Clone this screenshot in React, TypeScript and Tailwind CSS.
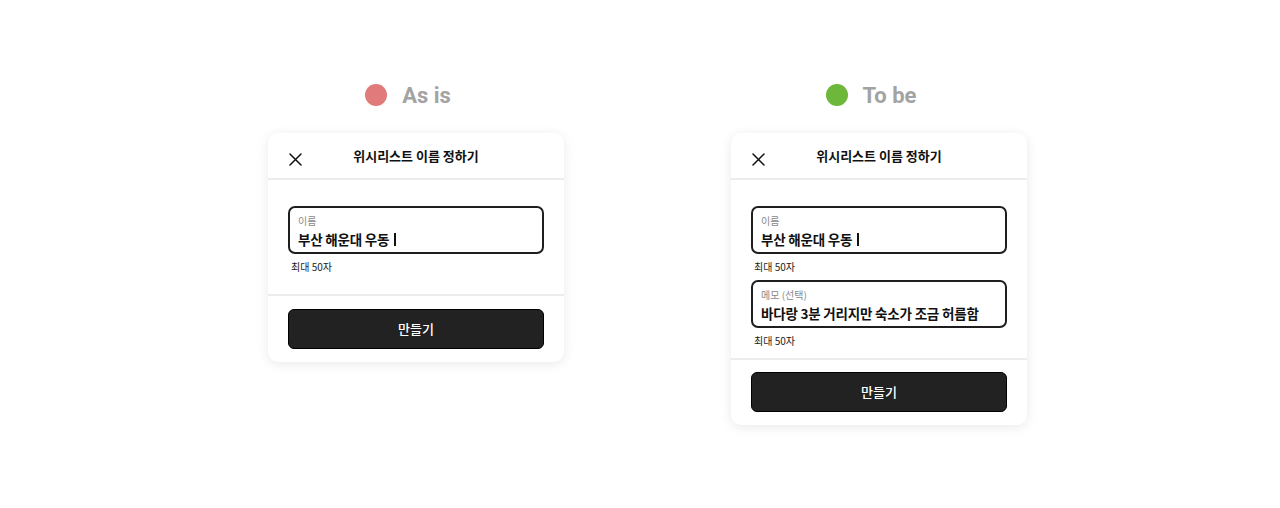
import React from "react";

const font = { fontFamily: '"Noto Sans CJK KR", "Noto Sans", sans-serif' };

function CloseIcon() {
  return (
    <svg width="13" height="13" viewBox="0 0 13 13" fill="none">
      <path d="M1 1L12 12M12 1L1 12" stroke="#111" strokeWidth="1.5" strokeLinecap="round" />
    </svg>
  );
}

function Field({ label, value, caret }: { label: string; value: string; caret?: boolean }) {
  return (
    <div>
      <div className="h-[48px] rounded-[7px] border-2 border-[#1e1e1e] px-[8px] pt-[6px]">
        <p className="text-[10px] leading-[14px] text-[#8a8a8a]">{label}</p>
        <p className="mt-[1px] text-[13.5px] leading-[20px] font-bold tracking-[-0.2px] text-[#111] whitespace-nowrap">
          {value}
          {caret && <span className="ml-[5px] inline-block h-[13px] w-[2px] bg-[#111] align-[-1px]"></span>}
        </p>
      </div>
      <p className="mt-[6px] pl-[3px] text-[10px] leading-[14px] text-[#222]">최대 50자</p>
    </div>
  );
}

function Card({ memo }: { memo?: boolean }) {
  return (
    <div className="w-[296px] overflow-hidden rounded-[10px] bg-white shadow-[0_2px_12px_rgba(0,0,0,0.09)]" style={font}>
      <div className="relative flex h-[47px] items-center justify-center border-b-2 border-[#ececec]">
        <span className="absolute left-[21px] top-[20px]">
          <CloseIcon />
        </span>
        <p className="text-[13px] font-bold text-[#111]">위시리스트 이름 정하기</p>
      </div>
      <div className={`flex flex-col gap-[6px] px-[20px] pt-[26px] ${memo ? "pb-[10px]" : "pb-[20px]"}`}>
        <Field label="이름" value="부산 해운대 우동" caret />
        {memo && <Field label="메모 (선택)" value="바다랑 3분 거리지만 숙소가 조금 허름함" />}
      </div>
      <div className={`border-t-2 border-[#ececec] px-[20px] pb-[13px] ${memo ? "pt-[12px]" : "pt-[13px]"}`}>
        <button className="flex h-[40px] w-full items-center justify-center rounded-[6px] border border-black bg-[#222] text-[13px] font-medium text-white">
          만들기
        </button>
      </div>
    </div>
  );
}

function Label({ dot, text }: { dot: string; text: string }) {
  return (
    <div className="flex h-[24px] items-center justify-center gap-[15px] pr-[16px]">
      <span className={`h-[22px] w-[22px] rounded-full ${dot}`}></span>
      <span className="text-[22px] font-bold text-[#a3a3a3]" style={{ fontFamily: "Roboto, sans-serif" }}>
        {text}
      </span>
    </div>
  );
}

export default function App() {
  return (
    <div className="flex h-[508px] w-[1280px] items-start gap-[167px] bg-white pl-[268px] pt-[83px]">
      <div className="flex w-[296px] flex-col gap-[26px]">
        <Label dot="bg-[#e17a7a]" text="As is" />
        <Card />
      </div>
      <div className="flex w-[296px] flex-col gap-[26px]">
        <Label dot="bg-[#6db73a]" text="To be" />
        <Card memo />
      </div>
    </div>
  );
}
